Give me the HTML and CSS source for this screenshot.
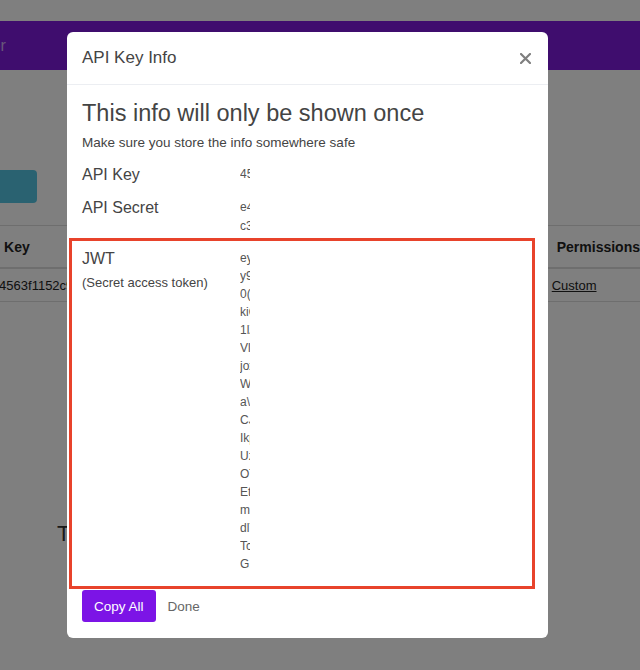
FILE: index.html
```html
<!DOCTYPE html>
<html lang="en">
<head>
    <meta charset="UTF-8">
    <meta name="viewport" content="width=device-width, initial-scale=1.0">
    <title>API Keys</title>
    <link rel="stylesheet" href="styles.css">
</head>
<body>
    <div class="page">
        <div class="top-strip"></div>
        <nav class="navbar">
            <span class="brand">API Explorer</span>
        </nav>

        <div class="toolbar">
            <button class="create-btn">Add Key</button>
        </div>

        <table class="keys-table">
            <thead>
                <tr>
                    <th class="col-name">Name</th>
                    <th class="col-key">Key</th>
                    <th class="col-created">Created</th>
                    <th class="col-perm">Permissions</th>
                </tr>
            </thead>
            <tbody>
                <tr>
                    <td class="col-name">default</td>
                    <td class="col-key">4563f1152c9a</td>
                    <td class="col-created">today</td>
                    <td class="col-perm"><a href="#">Custom</a></td>
                </tr>
            </tbody>
        </table>

        <h2 class="section-title">Try it out</h2>
    </div>

    <div class="backdrop"></div>

    <div class="modal">
        <div class="modal-header">
            <h2>API Key Info</h2>
            <button class="close-btn" aria-label="Close">
                <svg width="11" height="11" viewBox="0 0 11 11"><path d="M1 1L10 10M10 1L1 10" stroke="#7f7f7f" stroke-width="2.2" stroke-linecap="round"/></svg>
            </button>
        </div>

        <div class="modal-body">
            <h3>This info will only be shown once</h3>
            <p class="note">Make sure you store the info somewhere safe</p>

            <div class="field">
                <div class="field-label">API Key</div>
                <div class="field-value">
                    <span>4563f1152c9a</span>
                </div>
            </div>

            <div class="field">
                <div class="field-label">API Secret</div>
                <div class="field-value">
                    <span>e4a81f09c2d7</span>
                    <span>c3b71e6a90f4</span>
                </div>
            </div>

            <div class="field field-highlight">
                <div class="field-label">
                    JWT
                    <small>(Secret access token)</small>
                </div>
                <div class="field-value">
                    <span>eyJhbGciOiJI</span>
                    <span>y9MTM0NTY3OD</span>
                    <span>0(UzI1NiIsInR</span>
                    <span>kiOiJ0cmFjay</span>
                    <span>1lZDUzYjFhNW</span>
                    <span>Vl0RkYjIyZGU</span>
                    <span>joxNjA5NDU5M</span>
                    <span>WQ3MzQ1NjYx</span>
                    <span>a\9uZXRlc3Qi</span>
                    <span>CJzdWIiOiIxM</span>
                    <span>IkpXVCJ9LmV5</span>
                    <span>UzNzU4ZjdlN2</span>
                    <span>OTk0MjAwMjU1</span>
                    <span>EtmY2E1MTBl</span>
                    <span>mNmQ3ZjE2Zj</span>
                    <span>dlYjM3ZTg5ZT</span>
                    <span>TcwNzQ1MTc0</span>
                    <span>G.4zNWYxMTUy</span>
                </div>
            </div>
        </div>

        <div class="modal-footer">
            <button class="btn-primary">Copy All</button>
            <button class="btn-link">Done</button>
        </div>
    </div>
</body>
</html>
```

FILE: styles.css
```css
body {
    margin: 0;
    font-family: "Liberation Sans", Arial, sans-serif;
    background-color: #fff;
    color: #333;
    overflow: hidden;
    height: 670px;
}

/* page behind the dialog */
.page {
    width: 740px;
    margin-left: -100px;
}

.top-strip {
    height: 21px;
}

.navbar {
    height: 49px;
    background-color: #7f1add;
    display: flex;
    align-items: center;
    padding-left: 16px;
}

.brand {
    color: #cfb0f2;
    font-size: 16px;
}

.toolbar {
    padding: 100px 0 0 0;
}

.create-btn {
    width: 137px;
    height: 33px;
    border: none;
    border-radius: 4px;
    background-color: #55c5e2;
    color: #fff;
    font-size: 14px;
}

.keys-table {
    margin-top: 22px;
    width: 740px;
    border-collapse: collapse;
    font-size: 13px;
}

.keys-table th {
    height: 41px;
    text-align: left;
    font-size: 14px;
    color: #222;
    border-top: 1px solid #ddd;
    border-bottom: 2px solid #ddd;
    padding: 0;
}

.keys-table td {
    height: 32px;
    padding: 0;
    color: #222;
    border-bottom: 1px solid #ddd;
}

.keys-table .col-name {
    width: 84px;
    padding-left: 16px;
}

.col-key {
    width: 200px;
}

.keys-table th.col-key {
    padding-left: 5px;
}

.col-created {
    width: 356px;
}

.keys-table th.col-perm {
    padding-left: 5px;
}

.col-perm a {
    color: #222;
}

.section-title {
    margin: 219px 0 0 157px;
    font-size: 22px;
    font-weight: normal;
    color: #333;
}

.backdrop {
    position: fixed;
    top: 0;
    left: 0;
    right: 0;
    bottom: 0;
    background-color: rgba(0, 0, 0, 0.5);
}

/* dialog */
.modal {
    position: absolute;
    top: 32px;
    left: 67px;
    width: 481px;
    background-color: #fff;
    border-radius: 6px;
    color: #555;
}

.modal-header {
    height: 52px;
    padding: 0 15px;
    display: flex;
    align-items: center;
    justify-content: space-between;
    border-bottom: 1px solid #eceef2;
}

.modal-header h2 {
    margin: 0;
    font-size: 17px;
    font-weight: normal;
    color: #444;
}

.close-btn {
    border: none;
    background: none;
    padding: 0;
    margin-right: 2px;
    display: flex;
}

.modal-body {
    padding: 15px 15px 0;
}

.modal-body h3 {
    margin: 0;
    font-size: 23.5px;
    line-height: 27px;
    font-weight: normal;
    color: #444;
}

.note {
    margin: 7px 0 0;
    font-size: 13.5px;
    line-height: 18px;
    color: #444;
}

.field {
    display: flex;
    margin-top: 13px;
}

.field + .field {
    margin-top: 14px;
}

.field-label {
    width: 158px;
    flex-shrink: 0;
    font-size: 16px;
    line-height: 19px;
    color: #444;
}

.field-label small {
    display: block;
    margin-top: 6px;
    font-size: 13px;
    line-height: 18px;
}

.field-value {
    width: 10px;
    overflow: hidden;
    font-size: 12px;
    line-height: 19px;
    color: #555;
}

.field-value span {
    display: block;
    white-space: nowrap;
}

.field.field-highlight {
    margin: 2px -2px 0 -13px;
    padding: 8px 0 13px 10px;
    border: 3px solid #e8432b;
}

.field-highlight .field-value {
    line-height: 18px;
}

.modal-footer {
    display: flex;
    padding: 1px 15px 16px;
}

.btn-primary {
    height: 32px;
    padding: 0 12px;
    border: none;
    border-radius: 3px;
    background-color: #7c14e6;
    color: #fff;
    font-family: inherit;
    font-size: 13.5px;
}

.btn-link {
    margin-left: 0;
    padding: 0 12px;
    border: none;
    background: none;
    color: #666;
    font-family: inherit;
    font-size: 13.5px;
}
```
